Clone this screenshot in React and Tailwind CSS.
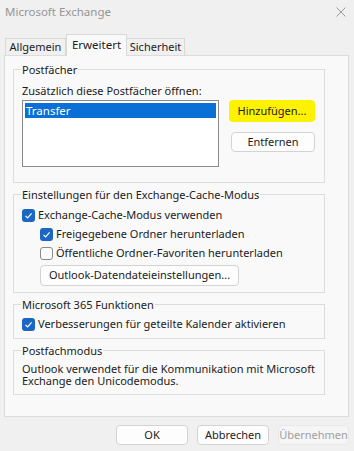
import React from 'react';

const font = { fontFamily: '"Noto Sans", "Open Sans", sans-serif' };

function Checkbox({ checked }) {
  if (!checked) {
    return <span className="block w-[13px] h-[13px] rounded-[3px] border border-[#8a8a8a] bg-[#fbfbfb] shrink-0" />;
  }
  return (
    <span className="flex w-[13px] h-[13px] rounded-[3px] bg-[#1a67c4] shrink-0 items-center justify-center">
      <svg width="13" height="13" viewBox="0 0 13 13">
        <polyline points="3.5,6.8 5.6,8.9 9.6,4.4" fill="none" stroke="white" strokeWidth="1.2" />
      </svg>
    </span>
  );
}

function CheckRow({ checked, label, indent }) {
  return (
    <div className={`flex items-center h-[19px] gap-[3px] ${indent ? 'ml-[18px]' : ''}`}>
      <Checkbox checked={checked} />
      <span>{label}</span>
    </div>
  );
}

function Group({ title, className, children }) {
  return (
    <fieldset className={`w-[312px] border border-[#dddddd] px-[8px] ${className}`}>
      <legend className="px-[1px] -ml-[1px] leading-[15px]">{title}</legend>
      {children}
    </fieldset>
  );
}

function Btn({ className, children }) {
  return (
    <div className={`flex items-center justify-center rounded-[4px] border border-[#d3d3d3] bg-[#fdfdfd] ${className}`}>
      {children}
    </div>
  );
}

export default function App() {
  return (
    <div className="w-[354px] h-[451px] bg-[#f0f0f0] text-[11px] text-[#1b1b1b] flex flex-col overflow-hidden" style={font}>
      <div className="h-[24px] flex items-center justify-between pl-[5px] pr-[8px]">
        <span className="text-[11.5px] text-[#959595]">Microsoft Exchange</span>
        <svg width="10" height="10" viewBox="0 0 10 10">
          <path d="M0.5 0.5 L9.5 9.5 M9.5 0.5 L0.5 9.5" stroke="#9a9a9a" strokeWidth="1" />
        </svg>
      </div>

      <div className="mt-[10px] h-[21px] flex items-end pl-[5px] relative z-10">
        <div className="h-[17px] w-[61px] border border-b-0 border-[#d9d9d9] bg-[#f0f0f0] flex items-center justify-center pt-[1px]">Allgemein</div>
        <div className="h-[22px] w-[61px] -mb-[1px] border border-b-0 border-[#d9d9d9] bg-[#f9f9f9] flex items-start justify-center pt-[1px] text-[11.5px]">Erweitert</div>
        <div className="h-[17px] w-[58px] border border-b-0 border-l-0 border-[#d9d9d9] bg-[#f0f0f0] flex items-center justify-center pt-[1px]">Sicherheit</div>
      </div>

      <div className="mx-[4px] mr-[5px] h-[362px] border border-[#dcdcdc] bg-[#f9f9f9] px-[8px] flex flex-col">
        <Group title="Postfächer" className="mt-[6px] pb-[15px]">
          <div className="mt-[6px] leading-[15px]">Zusätzlich diese Postfächer öffnen:</div>
          <div className="mt-[2px] flex">
            <div className="w-[197px] h-[67px] border border-[#8a8a8a] bg-white p-[2px]">
              <div className="h-[15px] bg-[#0a6fd6] text-white px-[1px] leading-[15px] text-[11.5px]">Transfer</div>
            </div>
            <div className="ml-[10px] flex flex-col">
              <div className="w-[86px] h-[22px] rounded-[4px] bg-[#fff200] flex items-center justify-center">Hinzufügen...</div>
              <Btn className="mt-[10px] ml-[2px] w-[84px] h-[20px]">Entfernen</Btn>
            </div>
          </div>
        </Group>

        <Group title="Einstellungen für den Exchange-Cache-Modus" className="mt-[4px] pb-[6px]">
          <div className="mt-[4px]">
            <CheckRow checked label="Exchange-Cache-Modus verwenden" />
            <CheckRow checked indent label="Freigegebene Ordner herunterladen" />
            <CheckRow indent label="Öffentliche Ordner-Favoriten herunterladen" />
          </div>
          <Btn className="mt-[2px] ml-[18px] w-[199px] h-[21px]">Outlook-Datendateieinstellungen...</Btn>
        </Group>

        <Group title="Microsoft 365 Funktionen" className="mt-[4px] pb-[4px]">
          <div className="mt-[3px]">
            <CheckRow checked label="Verbesserungen für geteilte Kalender aktivieren" />
          </div>
        </Group>

        <Group title="Postfachmodus" className="mt-[4px] pb-[7px]">
          <div className="mt-[5px] leading-[12px]">
            Outlook verwendet für die Kommunikation mit Microsoft Exchange den Unicodemodus.
          </div>
        </Group>
      </div>

      <div className="mt-[8px] flex justify-end gap-[9px] pr-[5px]">
        <Btn className="w-[72px] h-[20px]">OK</Btn>
        <Btn className="w-[72px] h-[20px]">Abbrechen</Btn>
        <div className="w-[71px] h-[20px] rounded-[4px] border border-[#e8e8e8] bg-[#f5f5f5] flex items-center justify-center text-[#a0a0a0]">Übernehmen</div>
      </div>
    </div>
  );
}
